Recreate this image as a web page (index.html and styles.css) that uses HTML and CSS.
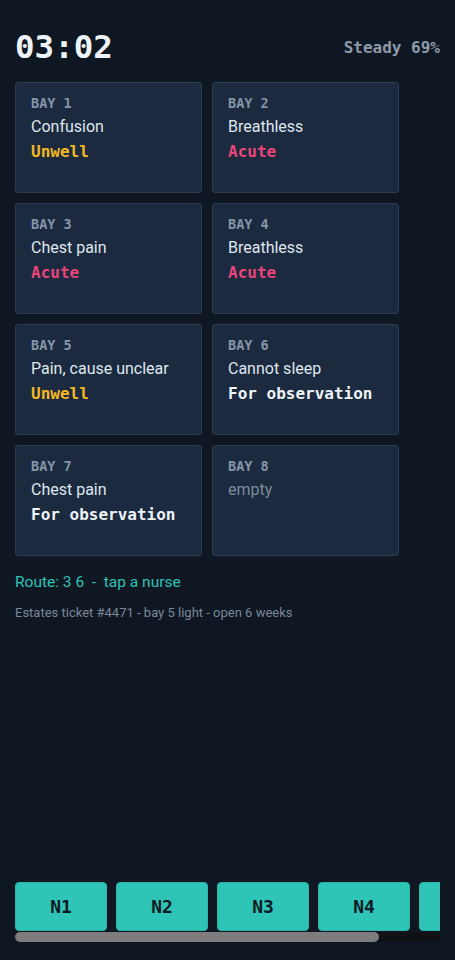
FILE: index.html
```html
<!DOCTYPE html>
<html lang="en">
<head>
<meta charset="utf-8">
<title>Ward</title>
<link rel="stylesheet" href="styles.css">
</head>
<body>
<div class="page">
  <header class="top">
    <div class="clock">03:02</div>
    <div class="steady">Steady 69%</div>
  </header>
  <main class="bays">
    <div class="bay"><div class="label">BAY 1</div><div class="name">Confusion</div><div class="status unwell">Unwell</div></div>
    <div class="bay"><div class="label">BAY 2</div><div class="name">Breathless</div><div class="status acute">Acute</div></div>
    <div class="bay"><div class="label">BAY 3</div><div class="name">Chest pain</div><div class="status acute">Acute</div></div>
    <div class="bay"><div class="label">BAY 4</div><div class="name">Breathless</div><div class="status acute">Acute</div></div>
    <div class="bay"><div class="label">BAY 5</div><div class="name">Pain, cause unclear</div><div class="status unwell">Unwell</div></div>
    <div class="bay"><div class="label">BAY 6</div><div class="name">Cannot sleep</div><div class="status obs">For observation</div></div>
    <div class="bay"><div class="label">BAY 7</div><div class="name">Chest pain</div><div class="status obs">For observation</div></div>
    <div class="bay"><div class="label">BAY 8</div><div class="name empty">empty</div></div>
  </main>
  <p class="route">Route: 3 6&nbsp; - &nbsp;tap a nurse</p>
  <p class="ticket">Estates ticket #4471 - bay 5 light - open 6 weeks</p>
  <div class="dock">
    <nav class="nurses">
      <button class="nurse">N1</button>
      <button class="nurse">N2</button>
      <button class="nurse">N3</button>
      <button class="nurse">N4</button>
      <button class="nurse">N5</button>
    </nav>
    <div class="scrollbar"><div class="thumb" style="width: 85.7%"></div></div>
  </div>
</div>
</body>
</html>
```
FILE: styles.css
```css
html, body {
  margin: 0;
  padding: 0;
  background: #0e1722;
}
.page {
  box-sizing: border-box;
  height: 960px;
  padding: 28px 15px 18px;
  display: flex;
  flex-direction: column;
  font-family: Roboto, "Liberation Sans", sans-serif;
  color: #dfe6ee;
}
.top {
  display: flex;
  justify-content: space-between;
  align-items: center;
  height: 38px;
}
.clock {
  font-family: "DejaVu Sans Mono", monospace;
  font-weight: bold;
  font-size: 32.5px;
  color: #eef3f8;
}
.steady {
  font-family: "DejaVu Sans Mono", monospace;
  font-weight: bold;
  font-size: 16px;
  color: #8d9aab;
}
.bays {
  margin-top: 16px;
  display: grid;
  grid-template-columns: repeat(2, 187px);
  grid-auto-rows: 111px;
  gap: 10px;
}
.bay {
  box-sizing: border-box;
  background: #1b2a3f;
  border: 1px solid #2b3c53;
  border-radius: 3px;
  padding: 11px 15px;
}
.label {
  font-family: "DejaVu Sans Mono", monospace;
  font-weight: bold;
  font-size: 13.5px;
  line-height: 18px;
  color: #8595a8;
}
.name {
  font-size: 16px;
  line-height: 24px;
  margin-top: 3px;
  color: #dfe6ee;
}
.name.empty {
  color: #7d8a9a;
}
.status {
  font-family: "DejaVu Sans Mono", monospace;
  font-weight: bold;
  font-size: 16px;
  line-height: 24px;
  margin-top: 1px;
}
.unwell { color: #f2b824; }
.acute { color: #e8457a; }
.obs { color: #eef3f8; }
.route {
  margin: 16px 0 0;
  font-size: 15.5px;
  line-height: 20px;
  color: #2ec4b6;
}
.ticket {
  margin: 13px 0 0;
  font-size: 13px;
  line-height: 16px;
  color: #7a8798;
}
.dock {
  margin-top: auto;
  display: flex;
  flex-direction: column;
  gap: 1px;
}
.nurses {
  display: flex;
  gap: 9px;
  overflow: hidden;
}
.nurse {
  flex: 0 0 92px;
  height: 49px;
  margin: 0;
  border: 1px solid #2ab5a8;
  border-radius: 4px;
  background: #2ec4b6;
  color: #0e1a24;
  font-family: "DejaVu Sans Mono", monospace;
  font-weight: bold;
  font-size: 18px;
}
.scrollbar {
  height: 10px;
  background: #101215;
}
.thumb {
  height: 100%;
  background: #7d7d7d;
  border-radius: 5px;
}
```
